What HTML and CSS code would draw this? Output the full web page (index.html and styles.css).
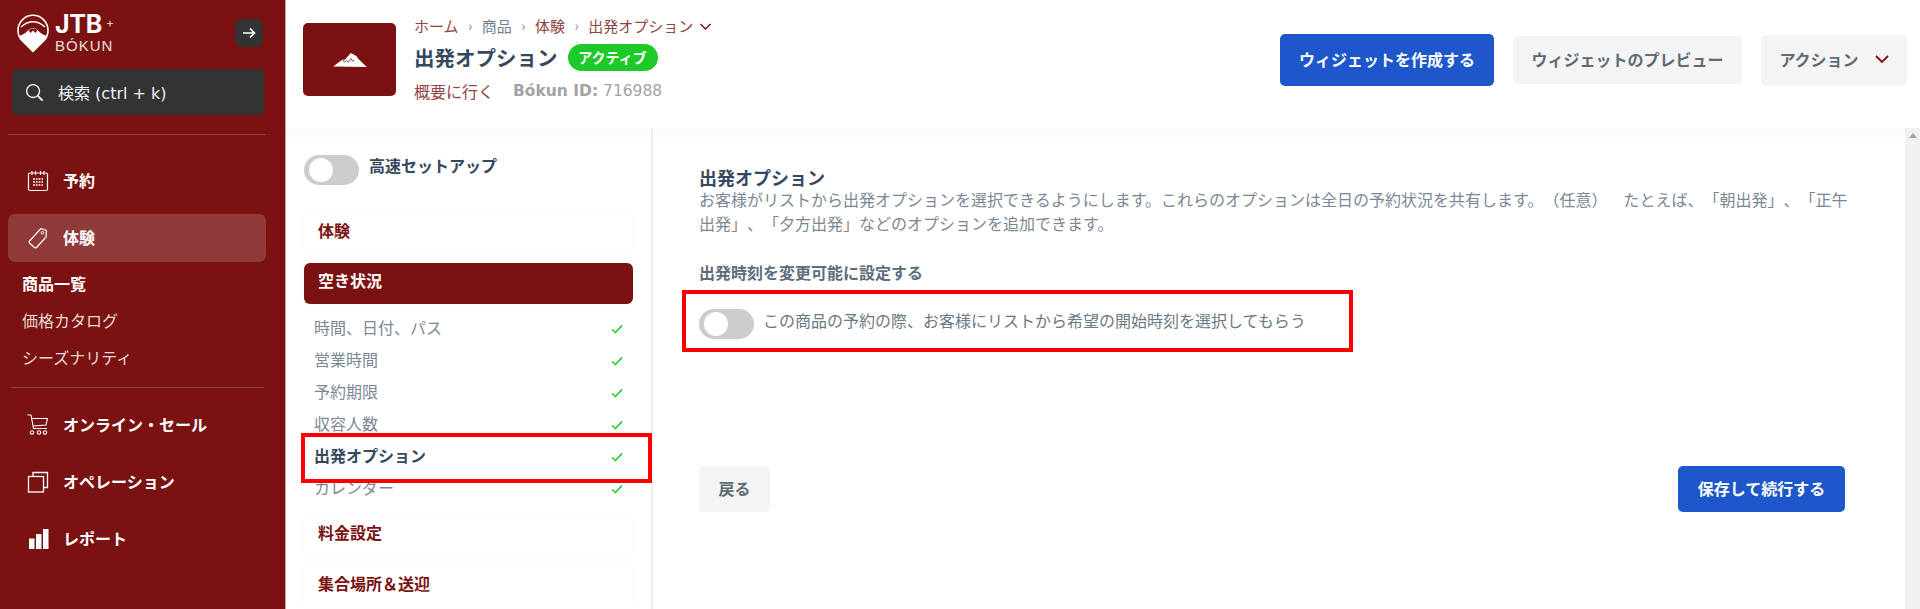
FILE: index.html
```html
<!DOCTYPE html>
<html lang="ja">
<head>
<meta charset="utf-8">
<title>出発オプション</title>
<link rel="stylesheet" href="styles.css">
</head>
<body>
<div class="app">
  <aside class="side">
    <div class="brand">
      <svg class="logo" viewBox="0 0 32 40" width="32" height="40">
        <path d="M16 38.500 L5 27.500 A15 15 0 1 1 27 27.500 Z" fill="none" stroke="#fff" stroke-width="1.600" stroke-linejoin="round"/>
        <path d="M2 23 C7 21.500 10 18.500 12.500 16 Q16 14.500 19.500 16 C22 18.500 25 21.500 30 23 L27 27.500 L16 38.500 L5 27.500 Z" fill="#fff"/>
        <path d="M11.500 17 L13.500 20 L16 17.500 L18.500 20 L20.500 17 Q16 14 11.500 17 Z" fill="#7a1212"/>
        <path d="M4 14 Q16 3.500 28 14" fill="none" stroke="#fff" stroke-width="1.300"/>
      </svg>
      <div class="brand-text">
        <div class="jtb">JTB<span class="plus">+</span></div>
        <div class="bokun">BÓKUN</div>
      </div>
      <button class="collapse" aria-label="collapse">
        <svg viewBox="0 0 16 16" width="16" height="16"><path d="M2 8h11M9 3.500 13.500 8 9 12.500" fill="none" stroke="#fff" stroke-width="1.700"/></svg>
      </button>
    </div>
    <div class="search">
      <svg viewBox="0 0 20 20" width="19" height="19"><circle cx="8.500" cy="8.500" r="6.800" fill="none" stroke="#fff" stroke-width="1.400"/><path d="M13.500 13.500 18.500 18.500" stroke="#fff" stroke-width="1.800"/></svg>
      <span>検索 (ctrl + k)</span>
    </div>
    <hr class="rule rule-a">
    <nav class="nav">
      <a class="nav-item">
        <svg viewBox="0 0 22 22" width="22" height="22"><rect x="1.500" y="3" width="19" height="17.500" rx="1.500" fill="none" stroke="#fff" stroke-width="1.200"/><path d="M5 1v4M8.500 1v4M13.500 1v4M17 1v4" stroke="#fff" stroke-width="1.100"/><path d="M6 9h10M6 12h10M6 15h10" stroke="#fff" stroke-width="1.700" stroke-dasharray="1.800 1"/></svg>
        <span>予約</span>
      </a>
      <a class="nav-item active">
        <svg viewBox="0 0 22 24" width="22" height="24"><path d="M14 2.500 19.500 4.500 19 11 9.500 21.500a1.500 1.500 0 0 1-2 0L2.500 17a1.500 1.500 0 0 1 0-2Z" fill="none" stroke="#fff" stroke-width="1.200" stroke-linejoin="round"/><circle cx="15.500" cy="6.800" r="1.300" fill="none" stroke="#fff"/></svg>
        <span>体験</span>
      </a>
      <div class="subnav">
        <a class="strong">商品一覧</a>
        <a>価格カタログ</a>
        <a>シーズナリティ</a>
      </div>
    </nav>
    <hr class="rule rule-b">
    <nav class="nav">
      <a class="nav-item">
        <svg viewBox="0 0 22 22" width="22" height="22"><path d="M.500 1H4l2.500 13.500H20M5 4.500h15.500L19 11 6 12" fill="none" stroke="#fff" stroke-width="1.100"/><circle cx="5" cy="18.500" r="1.700" fill="none" stroke="#fff" stroke-width="1.100"/><circle cx="12" cy="18.500" r="1.700" fill="none" stroke="#fff" stroke-width="1.100"/><circle cx="18" cy="18.500" r="1.700" fill="none" stroke="#fff" stroke-width="1.100"/></svg>
        <span>オンライン・セール</span>
      </a>
      <a class="nav-item">
        <svg viewBox="0 0 22 22" width="22" height="22"><rect x="1.500" y="5.500" width="15" height="15.500" fill="none" stroke="#fff" stroke-width="1.300"/><path d="M6 5.500V1.500h14.500V16.500h-4" fill="none" stroke="#fff" stroke-width="1.300"/></svg>
        <span>オペレーション</span>
      </a>
      <a class="nav-item">
        <svg viewBox="0 0 22 22" width="22" height="22"><path d="M2 10.500h5.500V21H2ZM9 6h5.500V21H9ZM16 1h5.500v20H16Z" fill="#fff"/></svg>
        <span>レポート</span>
      </a>
    </nav>
  </aside>
  <div class="main">
    <header class="top">
      <div class="thumb">
        <svg viewBox="0 0 36 16" width="36" height="15"><path d="M0 15.500 10 8l2 .500 7-7.500 6 3.500 2 3 9 8.500Z" fill="#fff"/><path d="M10 8l2 3 2-2 2 2 3-4 2 3 2-2" fill="none" stroke="#7a1212" stroke-width=".8"/></svg>
      </div>
      <div class="title-block">
        <div class="crumbs">
          <a>ホーム</a><i>›</i><span>商品</span><i>›</i><a>体験</a><i>›</i><a>出発オプション</a>
          <svg viewBox="0 0 12 8" width="13" height="8"><path d="M1 1l5 5 5-5" fill="none" stroke="#7a1212" stroke-width="1.500"/></svg>
        </div>
        <div class="title-row">
          <h1>出発オプション</h1>
          <span class="badge">アクティブ</span>
        </div>
        <div class="meta">
          <a>概要に行く</a>
          <span class="id"><b>Bókun ID:</b> 716988</span>
        </div>
      </div>
      <div class="actions">
        <button class="btn primary big">ウィジェットを作成する</button>
        <button class="btn grey big">ウィジェットのプレビュー</button>
        <button class="btn grey big action">アクション
          <svg viewBox="0 0 14 9" width="14" height="9"><path d="M1 1l6 6 6-6" fill="none" stroke="#7a1212" stroke-width="1.800"/></svg>
        </button>
      </div>
    </header>
    <div class="body">
      <div class="steps">
        <label class="fast"><span class="toggle"></span><span>高速セットアップ</span></label>
        <div class="step first">体験</div>
        <div class="step current">空き状況</div>
        <ul class="substeps">
          <li><span>時間、日付、パス</span><svg class="check" viewBox="0 0 12 10"><path d="M1 5.500 4.500 8.500 11 1.500" fill="none" stroke="#22c52c" stroke-width="1.600"/></svg></li>
          <li><span>営業時間</span><svg class="check" viewBox="0 0 12 10"><path d="M1 5.500 4.500 8.500 11 1.500" fill="none" stroke="#22c52c" stroke-width="1.600"/></svg></li>
          <li><span>予約期限</span><svg class="check" viewBox="0 0 12 10"><path d="M1 5.500 4.500 8.500 11 1.500" fill="none" stroke="#22c52c" stroke-width="1.600"/></svg></li>
          <li><span>収容人数</span><svg class="check" viewBox="0 0 12 10"><path d="M1 5.500 4.500 8.500 11 1.500" fill="none" stroke="#22c52c" stroke-width="1.600"/></svg></li>
          <li class="on"><span>出発オプション</span><svg class="check" viewBox="0 0 12 10"><path d="M1 5.500 4.500 8.500 11 1.500" fill="none" stroke="#22c52c" stroke-width="1.600"/></svg><b class="mark"></b></li>
          <li><span>カレンダー</span><svg class="check" viewBox="0 0 12 10"><path d="M1 5.500 4.500 8.500 11 1.500" fill="none" stroke="#22c52c" stroke-width="1.600"/></svg></li>
        </ul>
        <div class="step">料金設定</div>
        <div class="step">集合場所＆送迎</div>
      </div>
      <section class="panel">
        <h2>出発オプション</h2>
        <p class="desc">お客様がリストから出発オプションを選択できるようにします。これらのオプションは全日の予約状況を共有します。（任意）　たとえば、「朝出発」、「正午出発」、「夕方出発」などのオプションを追加できます。</p>
        <h3>出発時刻を変更可能に設定する</h3>
        <div class="opt"><span class="toggle"></span><span class="opt-text">この商品の予約の際、お客様にリストから希望の開始時刻を選択してもらう</span></div>
        <div class="form-actions">
          <button class="btn grey small">戻る</button>
          <button class="btn primary small">保存して続行する</button>
        </div>
      </section>
      <div class="scroll"></div>
    </div>
  </div>
</div>
</body>
</html>
```
FILE: styles.css
```css
*{box-sizing:border-box}
html,body{margin:0;height:100%;overflow:hidden}
body{font-family:"Noto Sans CJK JP","Noto Sans",sans-serif;color:#34495e;background:#fff;font-size:16px;text-spacing-trim:space-all}
svg{display:block;flex:none}
button{font-family:inherit;border:0}
.app{display:flex;height:609px}
.side{width:286px;flex:none;background:#7a1212;border-right:1px solid #c9a0a0;color:#fff;padding:0 19px 0 8px;overflow:hidden}
.brand{display:flex;align-items:center;height:60px;padding:6px 0 0 9px}
.brand-text{margin-left:6px;line-height:1}
.jtb{font:700 25px/23px "Inter","Noto Sans",sans-serif;letter-spacing:-.3px;display:flex;align-items:flex-start}
.plus{font-size:12px;font-weight:400;margin-left:4px;opacity:.8;line-height:20px}
.bokun{font:400 15px/15px "Liberation Sans",sans-serif;letter-spacing:1px;opacity:.85;margin-top:2px}
.collapse{margin-left:auto;width:28px;height:28px;background:#333;border-radius:7px;display:flex;align-items:center;justify-content:center;padding:0;margin-right:3px}
.search{display:flex;align-items:center;gap:14px;margin:9px 2px 0 4px;height:46px;background:#333;border-radius:5px;padding:0 13px;font:400 16px "DejaVu Sans","Noto Sans CJK JP",sans-serif;color:#eef2f7}
.rule{border:0;border-top:1px solid #934444;margin:0}
.rule-a{margin-top:19px}
.nav{display:flex;flex-direction:column}
.rule-a + .nav{margin-top:22px}
.nav-item{display:flex;align-items:center;gap:14px;height:48px;margin-bottom:9px;padding-left:19px;font-weight:700;font-size:16px;border-radius:7px;color:#fff}
.nav-item span{padding-bottom:3px}
.nav-item.active{background:#913a3a}
.subnav{display:flex;flex-direction:column;margin:-6px 0 0 14px;font-size:16px;line-height:36px;color:#e9d8d8}
.subnav a{height:37px}
.subnav .strong{font-weight:700;color:#fff}
.rule-b{margin:11px 2px 0 3px}
.rule-b + .nav{margin-top:13px}
.main{flex:1;min-width:0;display:flex;flex-direction:column}
.top{height:128px;flex:none;display:flex;align-items:flex-start;padding:23px 0 0 17px;position:relative}
.thumb{width:93px;height:73px;background:#7a1212;border-radius:5px;display:flex;align-items:center;justify-content:center;flex:none}
.title-block{margin-left:18px;margin-top:-10px}
.crumbs{display:flex;align-items:center;height:24px;font-size:15px;color:#7a1212}
.crumbs a{color:#934444}
.crumbs span{color:#6b7f90}
.crumbs i{font-style:normal;color:#7b8794;margin:0 9.500px;font-size:14px}
.crumbs svg{margin:4px 0 0 6px}
.title-row{display:flex;align-items:center;height:34px;margin-top:3px;gap:10px}
h1{margin:0;font-size:20.500px;font-weight:700;color:#34495e}
.badge{height:27px;width:90px;border-radius:14px;background:#1ec92a;color:#fff;font-size:14px;font-weight:700;display:flex;align-items:center;justify-content:center;line-height:1}
.meta{display:flex;align-items:center;height:32px;font-size:16px;gap:19px;margin-top:1px}
.meta a{color:#934444}
.id{color:#a3a3a3;font-family:"DejaVu Sans",sans-serif;font-size:15.500px}
.id b{font-weight:700}
.actions{margin-left:auto;display:flex;align-items:center;gap:19px;padding-right:13px;height:52px;margin-top:11px}
.btn{font-weight:700;border-radius:5px;font-size:16px;padding:0 0 2px;display:flex;align-items:center;justify-content:center}
.btn.primary{background:#1d57c9;color:#fff}
.btn.grey{background:#f4f4f4;color:#5f6b75}
.big.primary{width:214px;height:52px}
.big.grey{width:229px;height:48px}
.big.action{width:146px;height:51px;gap:16px}
.body{flex:1;min-height:0;display:flex}
.steps{width:367px;flex:none;border-right:2px solid #eee;padding:27px 18px 0 18px;background:linear-gradient(#fbfbfb,#fff 14px)}
.fast{display:flex;align-items:flex-start;gap:10px;font-weight:700;font-size:16px;color:#34495e;height:30px;line-height:20px}
.toggle{display:block;width:55px;height:30px;border-radius:15px;background:#ccc;position:relative;flex:none}
.toggle::after{content:"";position:absolute;left:5px;top:3px;width:24px;height:24px;border-radius:50%;background:#fff}
.step{height:41px;border-radius:6px;display:flex;align-items:center;padding:0 0 7px 14px;font-weight:700;font-size:16px;color:#7a1212;margin-bottom:10px;background:#fff;box-shadow:0 0 8px rgba(0,0,0,.025)}
.step.first{margin-top:28px;height:40px}
.step.current{background:#7a1212;color:#fff;margin-bottom:9px}
.substeps{list-style:none;margin:0 0 10px;padding:0 10px 0 10px;font-size:16px;color:#7b8794}
.substeps li{height:32px;display:flex;align-items:center;justify-content:space-between;position:relative}
.substeps li span{padding-bottom:4px}
.substeps li.on{font-weight:700;color:#34495e}
.check{width:12px;height:10px}
.mark{position:absolute;left:-13px;right:-29px;top:-8px;bottom:-10px;border:4px solid #f00;z-index:2}
.panel{flex:1;min-width:0;padding:37px 0 0 46px;background:linear-gradient(#fbfbfb,#fff 14px)}
h2{margin:0 0 -2px;font-size:18px;line-height:24px;font-weight:700;color:#34495e}
.desc{margin:0;width:1160px;font-size:16px;line-height:24px;color:#7b8794}
h3{margin:26px 0 0;font-size:16px;line-height:22px;font-weight:700;color:#5d6d7c}
.opt{display:flex;align-items:center;gap:9px;margin-top:26px;height:30px;font-size:16px;color:#6b7885;position:relative}
.opt-text{margin-top:-8px}
.opt::before{content:"";position:absolute;left:-17px;top:-19px;width:663px;height:54px;border:4px solid #f00}
.form-actions{display:flex;justify-content:space-between;margin-top:127px;width:1146px}
.btn.small{height:46px;padding-bottom:3px}
.small.grey{width:71px}
.small.primary{width:167px}
.scroll{width:15px;flex:none;background:#f1f1f1;padding-top:5px}
.scroll::before{content:"";display:block;width:0;height:0;margin:0 auto;border:4px solid transparent;border-top:0;border-bottom:5px solid #a3a3a3}
```
